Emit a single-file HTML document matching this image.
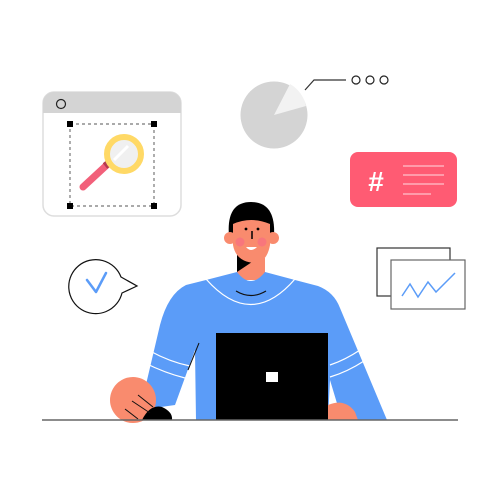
<!DOCTYPE html>
<html><head><style>body{margin:0;background:#fff}svg{display:block}</style></head>
<body>
<svg width="500" height="500" viewBox="0 0 500 500" xmlns="http://www.w3.org/2000/svg">
<rect x="43" y="92" width="138" height="124" rx="11" fill="#fff" stroke="#ddd" stroke-width="1.5"/>
<path d="M43 113 V103 a11 11 0 0 1 11 -11 H170 a11 11 0 0 1 11 11 V113 Z" fill="#d4d4d4"/>
<circle cx="61" cy="104" r="4.5" fill="none" stroke="#222" stroke-width="1.2"/>
<rect x="70" y="124" width="84" height="82" fill="none" stroke="#777" stroke-width="1.2" stroke-dasharray="3 3"/>
<rect x="67" y="121" width="6" height="6"/><rect x="151" y="121" width="6" height="6"/>
<rect x="67" y="203" width="6" height="6"/><rect x="151" y="203" width="6" height="6"/>
<line x1="109" y1="163" x2="83" y2="187" stroke="#f2607a" stroke-width="7" stroke-linecap="round"/>
<line x1="110" y1="162" x2="105" y2="166" stroke="#b33a50" stroke-width="7"/>
<circle cx="124" cy="154" r="17" fill="#f0f0f0" stroke="#ffd966" stroke-width="6"/>
<line x1="114" y1="160" x2="128" y2="146" stroke="#fff" stroke-width="3"/>
<circle cx="274" cy="115" r="33.5" fill="#d4d4d4"/>
<path d="M274 115 L290 84 A33.5 33.5 0 0 1 306 106 Z" fill="#f2f2f2"/>
<polyline points="305,90 314,80 346,80" fill="none" stroke="#333" stroke-width="1.2"/>
<circle cx="356" cy="80" r="4" fill="none" stroke="#222" stroke-width="1.2"/>
<circle cx="370" cy="80" r="4" fill="none" stroke="#222" stroke-width="1.2"/>
<circle cx="384" cy="80" r="4" fill="none" stroke="#222" stroke-width="1.2"/>
<rect x="350" y="152" width="107" height="55" rx="8" fill="#ff5b73"/>
<text x="376" y="191" font-family="Liberation Sans, sans-serif" font-weight="bold" font-size="28" fill="#fff" text-anchor="middle">#</text>
<g stroke="#ffdbe0" stroke-width="1"><line x1="403" y1="166" x2="444" y2="166"/><line x1="403" y1="175" x2="444" y2="175"/><line x1="403" y1="184" x2="444" y2="184"/><line x1="403" y1="194" x2="431" y2="194"/></g>
<path d="M121 277 A27 27 0 1 0 122 293 L137 286 Z" fill="#fff" stroke="#111" stroke-width="1.2"/>
<polyline points="87,280 96,292 106,273" fill="none" stroke="#5b9cf8" stroke-width="2.5" stroke-linecap="round" stroke-linejoin="round"/>
<rect x="377" y="248" width="73" height="48" fill="#fff" stroke="#333" stroke-width="1.2"/>
<rect x="391" y="260" width="74" height="49" fill="#fff" stroke="#666" stroke-width="1.2"/>
<polyline points="402,296 410,284 418,297 428,282 436,292 455,273" fill="none" stroke="#5b9cf8" stroke-width="1.5"/>
<path d="M237 258 L237 280 L265 280 L265 258 Z" fill="#f98b6e"/>
<path d="M237 255 L237 272 L258 258 Z" fill="#000"/>
<path d="M206 280 L237 272 Q251 290 265 272 L295 280 L318 286 Q334 292 340 308 L387 420 L342 420 L330 380 L328 420 L196 420 L195 350 L175 405 L140 410 L160 325 Q168 294 186 285 Z" fill="#5b9cf8"/>
<path d="M206 279 Q251 330 295 279" fill="none" stroke="#fff" stroke-width="1.2"/>
<path d="M236 291 Q251 300 266 291" fill="none" stroke="#111" stroke-width="1.2"/>
<path d="M150 351 Q170 362 190 366" fill="none" stroke="#fff" stroke-width="1.2"/>
<path d="M145 363 Q165 373 185 378" fill="none" stroke="#fff" stroke-width="1.2"/>
<path d="M330 365 Q345 360 360 350" fill="none" stroke="#fff" stroke-width="1.2"/>
<path d="M330 377 Q347 372 364 361" fill="none" stroke="#fff" stroke-width="1.2"/>
<line x1="199" y1="343" x2="188" y2="370" stroke="#111" stroke-width="1"/>
<path d="M229 236 Q226 202 251 202 Q276 202 274 236 Z" fill="#000"/>
<circle cx="230" cy="238" r="6" fill="#f98b6e"/><circle cx="273" cy="238" r="6" fill="#f98b6e"/>
<path d="M233 224 Q251 216 270 224 L270 245 Q267 262 255 263 Q236 262 233 245 Z" fill="#f98b6e"/>
<circle cx="240" cy="242" r="4.5" fill="#f8767c"/><circle cx="262" cy="242" r="4.5" fill="#f8767c"/>
<circle cx="246" cy="229" r="1.4"/><circle cx="258" cy="229" r="1.4"/>
<line x1="252" y1="231" x2="252" y2="239" stroke="#000" stroke-width="1.5"/>
<path d="M246 247 Q251 253 257 247 Z" fill="#fff"/>
<rect x="216" y="333" width="112" height="87" fill="#000"/>
<rect x="266" y="372" width="12" height="10" fill="#fff"/>
<path d="M328 405 Q345 398 355 412 L358 420 L328 420 Z" fill="#f98b6e"/>
<circle cx="133" cy="400" r="23" fill="#f98b6e"/>
<path d="M142 420 Q150 404 162 407 Q173 412 172 420 Z" fill="#000"/>
<g stroke="#111" stroke-width="1"><line x1="138" y1="395" x2="153" y2="407"/><line x1="132" y1="401" x2="150" y2="413"/><line x1="125" y1="409" x2="138" y2="419"/></g>
<line x1="42" y1="420" x2="458" y2="420" stroke="#666" stroke-width="1.5"/>
</svg>
</body></html>
